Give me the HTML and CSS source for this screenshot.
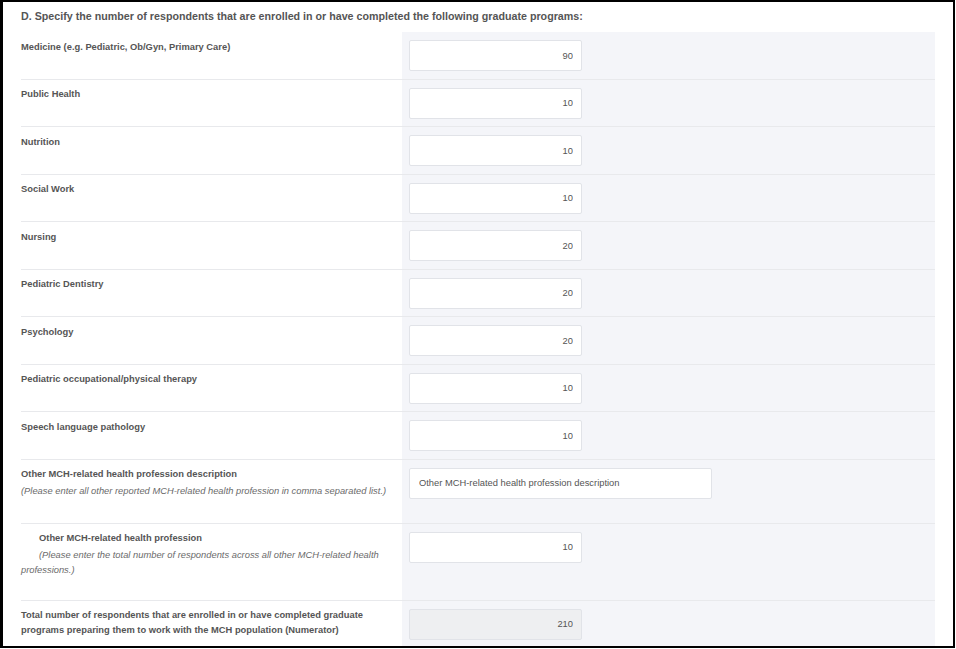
FILE: index.html
```html
<!DOCTYPE html>
<html lang="en">
<head>
    <meta charset="UTF-8">
    <meta name="viewport" content="width=device-width, initial-scale=1.0">
    <title>Graduate Programs</title>
    <link rel="stylesheet" href="styles.css">
</head>
<body>
    <div class="frame">
        <h3 class="question">D. Specify the number of respondents that are enrolled in or have completed the following graduate programs:</h3>

        <div class="rows">
            <div class="row">
                <div class="label">Medicine (e.g. Pediatric, Ob/Gyn, Primary Care)</div>
                <div class="field"><input class="num" type="text" value="90"></div>
            </div>
            <div class="row">
                <div class="label">Public Health</div>
                <div class="field"><input class="num" type="text" value="10"></div>
            </div>
            <div class="row">
                <div class="label">Nutrition</div>
                <div class="field"><input class="num" type="text" value="10"></div>
            </div>
            <div class="row">
                <div class="label">Social Work</div>
                <div class="field"><input class="num" type="text" value="10"></div>
            </div>
            <div class="row">
                <div class="label">Nursing</div>
                <div class="field"><input class="num" type="text" value="20"></div>
            </div>
            <div class="row">
                <div class="label">Pediatric Dentistry</div>
                <div class="field"><input class="num" type="text" value="20"></div>
            </div>
            <div class="row">
                <div class="label">Psychology</div>
                <div class="field"><input class="num" type="text" value="20"></div>
            </div>
            <div class="row">
                <div class="label">Pediatric occupational/physical therapy</div>
                <div class="field"><input class="num" type="text" value="10"></div>
            </div>
            <div class="row">
                <div class="label">Speech language pathology</div>
                <div class="field"><input class="num" type="text" value="10"></div>
            </div>
            <div class="row">
                <div class="label">
                    Other MCH-related health profession description
                    <p class="help">(Please enter all other reported MCH-related health profession in comma separated list.)</p>
                </div>
                <div class="field"><input class="text" type="text" value="Other MCH-related health profession description"></div>
            </div>
            <div class="row">
                <div class="label indent">
                    Other MCH-related health profession
                    <p class="help">(Please enter the total number of respondents across all other MCH-related health professions.)</p>
                </div>
                <div class="field"><input class="num" type="text" value="10"></div>
            </div>
            <div class="row">
                <div class="label">Total number of respondents that are enrolled in or have completed graduate programs preparing them to work with the MCH population (Numerator)</div>
                <div class="field"><input class="num" type="text" value="210" disabled></div>
            </div>
        </div>
    </div>
</body>
</html>
```

FILE: styles.css
```css
* {
    margin: 0;
    padding: 0;
    box-sizing: border-box;
}

body {
    font-family: 'Liberation Sans', Arial, sans-serif;
    background: #fff;
    color: #555;
}

.frame {
    width: 955px;
    height: 648px;
    border: 2px solid #000;
    border-left-width: 3px;
    padding: 0 18px;
    overflow: hidden;
}

.question {
    font-size: 10.7px;
    font-weight: bold;
    line-height: 14px;
    color: #555;
    padding-top: 7px;
    margin-bottom: 9px;
}

.row {
    display: grid;
    grid-template-columns: 381px 1fr;
    border-bottom: 1px solid #e8e9ec;
}

.label {
    font-size: 9.35px;
    font-weight: bold;
    line-height: 15px;
    color: #555;
    padding: 7.5px 8px 23.5px 0;
}

.label.indent {
    text-indent: 18px;
    padding-bottom: 21.5px;
}

.help {
    font-style: italic;
    font-weight: normal;
    color: #6a6a6a;
    margin-top: 2px;
}

.field {
    background: #f4f5f9;
    padding: 8px 7px 7.5px;
}

.field input {
    display: block;
    height: 31px;
    border: 1px solid #e1e3e8;
    border-radius: 2px;
    background: #fff;
    font-family: inherit;
    font-size: 9.35px;
    color: #555;
    outline: none;
}

.num {
    width: 173px;
    text-align: right;
    padding: 0 8px;
}

.text {
    width: 303px;
    padding: 0 9px;
}

.field input:disabled {
    background: #eeeff1;
    color: #555;
}
```
